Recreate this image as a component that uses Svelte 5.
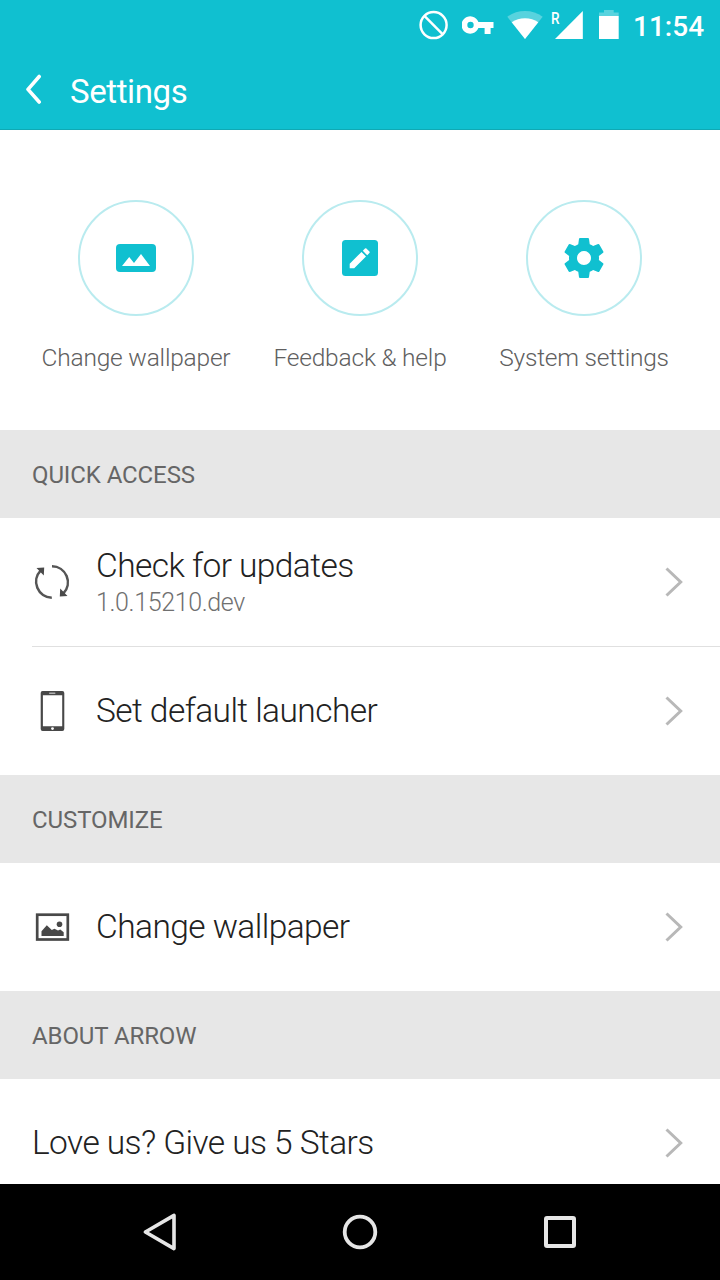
<script lang="ts">
  type IconName = "wallpaper" | "feedback" | "gear" | "refresh" | "phone" | "picture";

  type Item = { title: string; subtitle?: string; icon?: IconName };

  const shortcuts: { label: string; icon: IconName }[] = [
    { label: "Change wallpaper", icon: "wallpaper" },
    { label: "Feedback & help", icon: "feedback" },
    { label: "System settings", icon: "gear" },
  ];

  const sections: { title: string; items: Item[] }[] = [
    {
      title: "QUICK ACCESS",
      items: [
        { title: "Check for updates", subtitle: "1.0.15210.dev", icon: "refresh" },
        { title: "Set default launcher", icon: "phone" },
      ],
    },
    {
      title: "CUSTOMIZE",
      items: [{ title: "Change wallpaper", icon: "picture" }],
    },
    {
      title: "ABOUT ARROW",
      items: [{ title: "Love us? Give us 5 Stars" }],
    },
  ];
</script>

{#snippet icon(name: IconName)}
  {#if name === "wallpaper"}
    <svg width="48" height="48" viewBox="0 0 48 48">
      <rect x="4" y="10" width="40" height="28" rx="4" fill="#10c0d0" />
      <path d="M10 32 17.2 23 22 29 29 20 38 32Z" fill="#fff" />
    </svg>
  {:else if name === "feedback"}
    <svg width="48" height="48" viewBox="0 0 48 48">
      <rect x="6" y="6" width="36" height="36" rx="3.5" fill="#10c0d0" />
      <path d="M13.7 29.7V34.2H18.2L30 22.4 25.5 17.9ZM33.4 19Q34.1 18.3 33.4 17.6L30.4 14.6Q29.7 13.9 29 14.6L26.8 16.8 31.2 21.2Z" fill="#fff" />
    </svg>
  {:else if name === "gear"}
    <svg width="48" height="48" viewBox="0 0 24 24">
      <path d="M19.43 12.98c.04-.32.07-.64.07-.98s-.03-.66-.07-.98l2.11-1.65c.19-.15.24-.42.12-.64l-2-3.46c-.12-.22-.39-.3-.61-.22l-2.49 1c-.52-.4-1.08-.73-1.69-.98l-.38-2.65C14.46 2.18 14.25 2 14 2h-4c-.25 0-.46.18-.49.42l-.38 2.65c-.61.25-1.17.59-1.69.98l-2.49-1c-.23-.09-.49 0-.61.22l-2 3.46c-.13.22-.07.49.12.64l2.11 1.65c-.04.32-.07.65-.07.98s.03.66.07.98l-2.11 1.65c-.19.15-.24.42-.12.64l2 3.46c.12.22.39.3.61.22l2.49-1c.52.4 1.08.73 1.69.98l.38 2.65c.03.24.24.42.49.42h4c.25 0 .46-.18.49-.42l.38-2.65c.61-.25 1.17-.59 1.69-.98l2.49 1c.23.09.49 0 .61-.22l2-3.46c.12-.22.07-.49-.12-.64l-2.11-1.65zM12 15.5c-1.93 0-3.5-1.57-3.5-3.5s1.57-3.5 3.5-3.5 3.5 1.57 3.5 3.5-1.57 3.5-3.5 3.5z" fill="#10c0d0" />
    </svg>
  {:else if name === "refresh"}
    <svg width="40" height="40" viewBox="0 0 40 40">
      <path d="M20 4.3A16 16 0 0 1 31.4 31.4M19.8 35.7A16 16 0 0 1 8.6 8.6" fill="none" stroke="#555" stroke-width="2.6" />
      <path d="M4.5 6 12.2 5.5 11.8 13.4ZM35.5 34 27.8 34.5 28.2 26.6Z" fill="#4a4a4a" />
    </svg>
  {:else if name === "phone"}
    <svg width="40" height="40" viewBox="0 0 40 40">
      <path d="M10.5 0H30.3Q32.3 0 32.3 2V38Q32.3 40 30.3 40H10.6Q8.7 40 8.7 38V2Q8.7 0 10.5 0ZM10.9 4.3V35.3H30.2V4.3Z" fill="#484848" fill-rule="evenodd" />
      <rect x="17" y="1.4" width="6.5" height="1.5" rx=".7" fill="#b0b0b0" />
      <circle cx="20.5" cy="37.6" r="1.4" fill="#fff" />
    </svg>
  {:else if name === "picture"}
    <svg width="40" height="40" viewBox="0 0 40 40">
      <rect x="5.2" y="7.7" width="30.6" height="24.8" fill="none" stroke="#484848" stroke-width="2.7" />
      <path d="M9.5 29V24.2L14.8 18.2 19.8 23 22.5 21.8 26 23.5 28.3 22.5 31.7 25.2V29Z" fill="#484848" />
      <circle cx="27.5" cy="17.2" r="2.8" fill="#484848" />
    </svg>
  {/if}
{/snippet}

<div class="screen">
  <header>
    <div class="status-bar">
      <svg width="30" height="30" viewBox="0 0 30 30">
        <circle cx="15.6" cy="15.1" r="13" fill="none" stroke="#fff" stroke-width="2.5" />
        <path d="M6.4 5.9 24.8 24.3" stroke="#fff" stroke-width="2.5" />
      </svg>
      <svg class="key" width="32" height="30" viewBox="0 0 32 30">
        <path d="M16.4 12H31.5V18H28.6V24H22.6V18H16.4A8.7 8.7 0 1 1 16.4 12ZM8.5 11.8A3.2 3.2 0 1 0 8.5 18.2 3.2 3.2 0 1 0 8.5 11.8Z" fill="#fff" fill-rule="evenodd" />
      </svg>
      <svg class="wifi" width="36" height="30" viewBox="0 0 36 30">
        <path d="M18 29 0.3 6.8Q8 1 18 1T35.7 6.8Z" fill="#fff" opacity=".3" />
        <path d="M18 29 4.7 12.3Q10.5 8.3 18 8.3T31.3 12.3Z" fill="#fff" />
      </svg>
      <div class="signal">
        <span class="roaming">R</span>
        <svg width="28" height="30" viewBox="0 0 28 30">
          <path d="M0 29H27.8V1Z" fill="#fff" />
        </svg>
      </div>
      <svg class="battery" width="20" height="30" viewBox="0 0 20 30">
        <path d="M0 6V2.4H5V0H14.7V2.4H19.7V6Z" fill="#fff" opacity=".3" />
        <rect y="6" width="19.7" height="23" fill="#fff" />
      </svg>
      <span class="time">11:54</span>
    </div>
    <div class="title-bar">
      <svg width="20" height="32" viewBox="0 0 20 32">
        <path d="M15.2 2.5 4 15.4 15.2 28" fill="none" stroke="#fff" stroke-width="3.6" stroke-linecap="round" stroke-linejoin="round" />
      </svg>
      <h1>Settings</h1>
    </div>
  </header>

  <main>
    <div class="shortcuts">
      {#each shortcuts as shortcut (shortcut.icon)}
        <div class="shortcut">
          <div class="circle">{@render icon(shortcut.icon)}</div>
          <span>{shortcut.label}</span>
        </div>
      {/each}
    </div>

    {#each sections as section (section.title)}
      <h2>{section.title}</h2>
      {#each section.items as item, i (item.title)}
        {#if i > 0}
          <div class="divider"></div>
        {/if}
        <div class="row">
          {#if item.icon}
            <div class="row-icon">{@render icon(item.icon)}</div>
          {/if}
          <div class="row-text">
            <div class="row-title">{item.title}</div>
            {#if item.subtitle}
              <div class="row-subtitle">{item.subtitle}</div>
            {/if}
          </div>
          <svg width="20" height="32" viewBox="0 0 20 32">
            <path d="M2.5 2.5 16.7 16 2.5 29.5" fill="none" stroke="#b8b8b8" stroke-width="3" />
          </svg>
        </div>
      {/each}
    {/each}
  </main>

  <nav>
    <svg width="40" height="40" viewBox="0 0 40 40">
      <path d="M5.4 20 34 3.4V36.6Z" fill="none" stroke="#e6e6e6" stroke-width="3.6" stroke-linejoin="round" />
    </svg>
    <svg width="40" height="40" viewBox="0 0 40 40">
      <circle cx="20" cy="20" r="15.3" fill="none" stroke="#e6e6e6" stroke-width="3.8" />
    </svg>
    <svg width="40" height="40" viewBox="0 0 40 40">
      <rect x="6" y="6" width="28" height="28" rx="1" fill="none" stroke="#e6e6e6" stroke-width="4" />
    </svg>
  </nav>
</div>

<style>
  :global(body) {
    margin: 0;
    overflow: hidden;
  }

  .screen {
    display: flex;
    flex-direction: column;
    width: 720px;
    height: 1280px;
    overflow: hidden;
    background: #fff;
    font-family: Roboto, "Liberation Sans", sans-serif;
  }

  svg {
    display: block;
    flex: none;
  }

  header {
    flex: none;
    box-sizing: border-box;
    height: 130px;
    background: #10c0d0;
    border-bottom: 1px solid #0fa9b4;
    color: #fff;
  }

  .status-bar {
    display: flex;
    align-items: center;
    justify-content: flex-end;
    height: 50px;
    padding-right: 16px;
  }

  .key {
    margin-left: 14px;
  }

  .wifi {
    margin-left: 13px;
  }

  .signal {
    display: flex;
    width: 32px;
    margin-left: 8px;
  }

  .roaming {
    width: 4px;
    font-size: 17px;
    font-weight: 500;
    line-height: 16px;
    transform: scaleX(0.8);
    transform-origin: left;
  }

  .battery {
    margin-left: 16px;
  }

  .time {
    width: 71px;
    margin-left: 14px;
    padding-top: 3px;
    font-size: 28px;
    font-weight: 500;
    line-height: 32px;
    text-align: right;
    white-space: nowrap;
  }

  .title-bar {
    display: flex;
    align-items: center;
    height: 79px;
    padding-left: 24px;
  }

  h1 {
    margin: 3px 0 0 26px;
    font-size: 33px;
    font-weight: 400;
    letter-spacing: -0.4px;
    line-height: 41px;
  }

  main {
    flex: 1;
    min-height: 0;
    overflow: hidden;
  }

  .shortcuts {
    display: grid;
    grid-template-columns: repeat(3, 1fr);
    box-sizing: border-box;
    height: 300px;
    padding: 70px 24px 0;
  }

  .shortcut {
    display: flex;
    flex-direction: column;
    align-items: center;
    gap: 25px;
    color: #606060;
    font-size: 24.5px;
    font-weight: 300;
    letter-spacing: -0.2px;
    line-height: 33px;
  }

  .circle {
    display: flex;
    align-items: center;
    justify-content: center;
    box-sizing: border-box;
    width: 116px;
    height: 116px;
    border: 2px solid #b9ebef;
    border-radius: 50%;
  }

  h2 {
    height: 88px;
    margin: 0;
    padding: 1px 32px 0;
    box-sizing: border-box;
    background: #e7e7e7;
    color: #666;
    font-size: 24px;
    font-weight: 400;
    letter-spacing: -0.1px;
    line-height: 88px;
  }

  .row {
    display: flex;
    align-items: center;
    height: 128px;
    padding: 0 36px 0 32px;
  }

  .row-icon {
    width: 64px;
  }

  .row-text {
    flex: 1;
    font-weight: 300;
  }

  .row-title {
    color: #222;
    font-size: 33.5px;
    letter-spacing: -0.57px;
    line-height: 38px;
  }

  .row-subtitle {
    padding-top: 1px;
    margin-bottom: -3px;
    color: #707070;
    font-size: 25px;
    letter-spacing: -0.37px;
    line-height: 34px;
  }

  .divider {
    height: 1px;
    margin-left: 32px;
    background: #e0e0e0;
  }

  nav {
    display: flex;
    flex: none;
    align-items: center;
    justify-content: center;
    gap: 160px;
    height: 96px;
    background: #000;
  }
</style>
